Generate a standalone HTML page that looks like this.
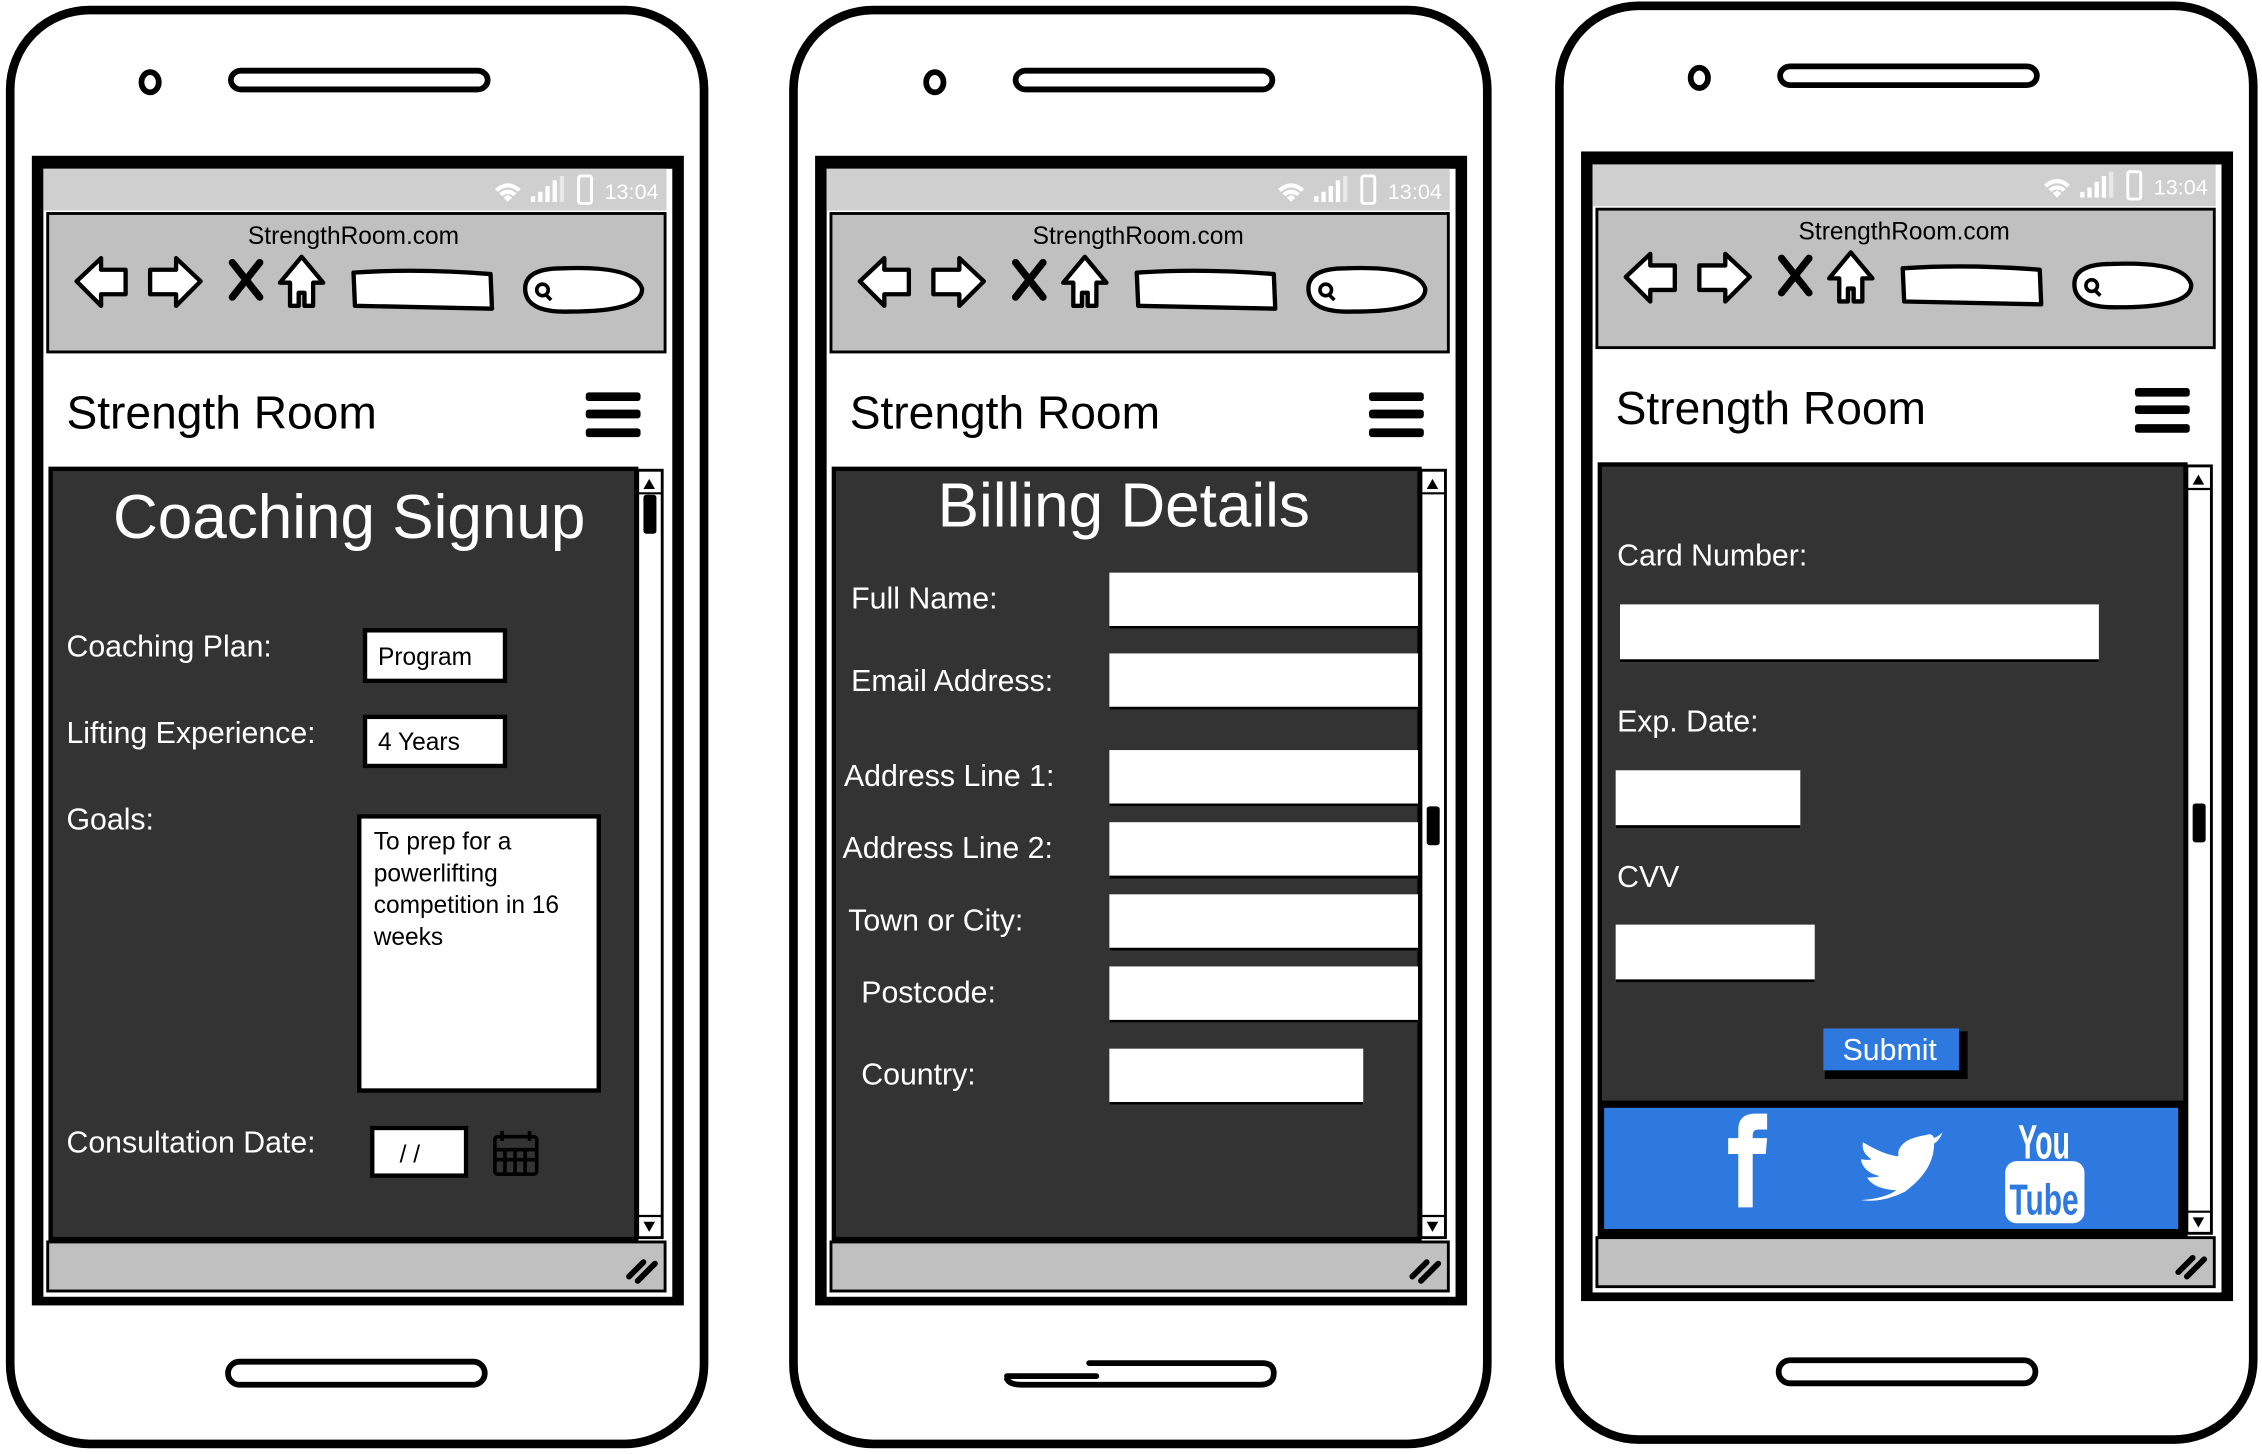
<!DOCTYPE html>
<html><head><meta charset="utf-8"><style>
html,body{margin:0;padding:0;background:#fff;}
svg{display:block}
text{font-family:"Liberation Sans",sans-serif}
</style></head><body>
<svg width="2262" height="1454" viewBox="0 0 1568 1008" xmlns="http://www.w3.org/2000/svg">
<rect width="1568" height="1008" fill="#fff"/>

<!-- ============ PHONE 1 ============ -->
<g>
<rect x="7" y="7" width="481" height="994" rx="55" fill="#fff" stroke="#000" stroke-width="6"/>
<ellipse cx="104" cy="57" rx="6" ry="7" fill="#fff" stroke="#000" stroke-width="4"/>
<rect x="160" y="49" width="178" height="13" rx="7" fill="#fff" stroke="#000" stroke-width="4"/>
<rect x="22" y="108" width="452" height="797" fill="#000"/>
<rect x="30" y="117" width="436" height="782" fill="#fff"/>
<rect x="30" y="117" width="432" height="29" fill="#cfcfcf"/>
<g fill="#fff"><path d="M343 131 q9-8 18 0 l-2 2 q-7-6-14 0z M346 134 q6-5 12 0 l-2 2 q-4-3-8 0z M349 137 l3-2 3 2 -3 3z"/>
<rect x="368" y="136" width="3" height="4"/><rect x="373" y="133" width="3" height="7"/><rect x="378" y="129" width="3" height="11"/><rect x="383" y="125" width="3" height="15"/><rect x="388" y="122" width="3" height="18" fill="#e8e8e8"/>
<rect x="401" y="122" width="9" height="19" rx="1.5" fill="none" stroke="#fff" stroke-width="2"/></g>
<text x="419" y="138" font-size="15" fill="#fff">13:04</text>
<rect x="33" y="148" width="428" height="96" fill="#c0c0c0" stroke="#000" stroke-width="2"/>
<text x="245" y="169" font-size="17" text-anchor="middle" fill="#000">StrengthRoom.com</text>
<g fill="#fff" stroke="#000" stroke-width="3" stroke-linejoin="round">
<path d="M53 195 L70 179 L70 187 L87 187 L87 204 L70 204 L70 212 Z"/>
<path d="M139 195 L122 179 L122 187 L104 187 L104 204 L122 204 L122 212 Z"/>
<path d="M209 178 L224 196 L217 196 L217 212 L211 212 L211 203 L207 203 L207 212 L201 212 L201 196 L194 196 Z"/>
<path d="M245 189 Q290 186 340 190 L341 214 Q290 213 246 212 Z"/>
<path d="M364 200 Q364 186 390 186 Q440 184 445 200 Q446 216 395 216 Q364 217 364 200 Z"/>
</g>
<path d="M161 182 L180 206 M180 182 L161 206" stroke="#000" stroke-width="5" stroke-linecap="round"/>
<circle cx="376" cy="201" r="4" fill="none" stroke="#000" stroke-width="2.5"/><path d="M378 204 l4 4" stroke="#000" stroke-width="2.5"/>
<rect x="33" y="246" width="428" height="78" fill="#fff"/>
<text x="46" y="297" font-size="32" fill="#000">Strength Room</text>
<g fill="#000"><rect x="406" y="272" width="38" height="6" rx="2"/><rect x="406" y="284" width="38" height="6" rx="2"/><rect x="406" y="297" width="38" height="6" rx="2"/></g>
<rect x="35" y="325" width="406" height="534" fill="#333" stroke="#000" stroke-width="3"/>
<rect x="442" y="326" width="17" height="532" fill="#fff" stroke="#000" stroke-width="2"/>
<path d="M446 339 l4-7 4 7z M446 847 l4 7 4-7z" fill="#000"/>
<line x1="442" y1="342" x2="459" y2="342" stroke="#000" stroke-width="1.5"/><line x1="442" y1="843" x2="459" y2="843" stroke="#000" stroke-width="1.5"/>
<rect x="446" y="343" width="9" height="27" rx="2" fill="#000"/>
<rect x="33" y="861" width="428" height="34" fill="#c0c0c0" stroke="#000" stroke-width="2"/>
<path d="M436 885 l10-10 M442 888 l12-12" stroke="#000" stroke-width="4" stroke-linecap="round"/>
<rect x="158" y="944" width="178" height="16" rx="8" fill="#fff" stroke="#000" stroke-width="4"/>
<!-- content -->
<text x="242" y="373" font-size="43" fill="#fff" text-anchor="middle">Coaching Signup</text>
<g font-size="21" fill="#fff">
<text x="46" y="455">Coaching Plan:</text>
<text x="46" y="515">Lifting Experience:</text>
<text x="46" y="575">Goals:</text>
<text x="46" y="799">Consultation Date:</text>
</g>
<g fill="#fff" stroke="#000" stroke-width="3">
<rect x="253" y="437" width="97" height="35"/>
<rect x="253" y="497" width="97" height="34"/>
<rect x="249" y="566" width="166" height="190"/>
<rect x="258" y="782" width="65" height="33"/>
</g>
<g font-size="17" fill="#000">
<text x="262" y="461">Program</text>
<text x="262" y="520">4 Years</text>
<text x="259" y="589">To prep for a</text>
<text x="259" y="611">powerlifting</text>
<text x="259" y="633">competition in 16</text>
<text x="259" y="655">weeks</text>
<text x="277" y="806">/ /</text>
</g>
<g fill="none" stroke="#000" stroke-width="2.5"><rect x="343" y="788" width="29" height="26" rx="2"/>
<path d="M343 797 h29 M343 804 h29 M350 797 v17 M357 797 v17 M364 797 v17 M348 784 v7 M367 784 v7"/></g>
</g>

<!-- ============ PHONE 2 ============ -->
<g transform="translate(543,0)">
<rect x="7" y="7" width="481" height="994" rx="55" fill="#fff" stroke="#000" stroke-width="6"/>
<ellipse cx="105" cy="57" rx="6" ry="7" fill="#fff" stroke="#000" stroke-width="4"/>
<rect x="161" y="49" width="178" height="13" rx="7" fill="#fff" stroke="#000" stroke-width="4"/>
<rect x="22" y="108" width="452" height="797" fill="#000"/>
<rect x="30" y="117" width="436" height="782" fill="#fff"/>
<rect x="30" y="117" width="432" height="29" fill="#cfcfcf"/>
<g fill="#fff"><path d="M343 131 q9-8 18 0 l-2 2 q-7-6-14 0z M346 134 q6-5 12 0 l-2 2 q-4-3-8 0z M349 137 l3-2 3 2 -3 3z"/>
<rect x="368" y="136" width="3" height="4"/><rect x="373" y="133" width="3" height="7"/><rect x="378" y="129" width="3" height="11"/><rect x="383" y="125" width="3" height="15"/><rect x="388" y="122" width="3" height="18" fill="#e8e8e8"/>
<rect x="401" y="122" width="9" height="19" rx="1.5" fill="none" stroke="#fff" stroke-width="2"/></g>
<text x="419" y="138" font-size="15" fill="#fff">13:04</text>
<rect x="33" y="148" width="428" height="96" fill="#c0c0c0" stroke="#000" stroke-width="2"/>
<text x="246" y="169" font-size="17" text-anchor="middle" fill="#000">StrengthRoom.com</text>
<g fill="#fff" stroke="#000" stroke-width="3" stroke-linejoin="round">
<path d="M53 195 L70 179 L70 187 L87 187 L87 204 L70 204 L70 212 Z"/>
<path d="M139 195 L122 179 L122 187 L104 187 L104 204 L122 204 L122 212 Z"/>
<path d="M209 178 L224 196 L217 196 L217 212 L211 212 L211 203 L207 203 L207 212 L201 212 L201 196 L194 196 Z"/>
<path d="M245 189 Q290 186 340 190 L341 214 Q290 213 246 212 Z"/>
<path d="M364 200 Q364 186 390 186 Q440 184 445 200 Q446 216 395 216 Q364 217 364 200 Z"/>
</g>
<path d="M161 182 L180 206 M180 182 L161 206" stroke="#000" stroke-width="5" stroke-linecap="round"/>
<circle cx="376" cy="201" r="4" fill="none" stroke="#000" stroke-width="2.5"/><path d="M378 204 l4 4" stroke="#000" stroke-width="2.5"/>
<rect x="33" y="246" width="428" height="78" fill="#fff"/>
<text x="46" y="297" font-size="32" fill="#000">Strength Room</text>
<g fill="#000"><rect x="406" y="272" width="38" height="6" rx="2"/><rect x="406" y="284" width="38" height="6" rx="2"/><rect x="406" y="297" width="38" height="6" rx="2"/></g>
<rect x="35" y="325" width="406" height="534" fill="#333" stroke="#000" stroke-width="3"/>
<rect x="442" y="326" width="17" height="532" fill="#fff" stroke="#000" stroke-width="2"/>
<path d="M446 339 l4-7 4 7z M446 847 l4 7 4-7z" fill="#000"/>
<line x1="442" y1="342" x2="459" y2="342" stroke="#000" stroke-width="1.5"/><line x1="442" y1="843" x2="459" y2="843" stroke="#000" stroke-width="1.5"/>
<rect x="446" y="559" width="9" height="27" rx="2" fill="#000"/>
<rect x="33" y="861" width="428" height="34" fill="#c0c0c0" stroke="#000" stroke-width="2"/>
<path d="M436 885 l10-10 M442 888 l12-12" stroke="#000" stroke-width="4" stroke-linecap="round"/>
<path d="M155 954 h62 M212 945 h120 q8 0 8 7 q0 8 -10 8 h-165 q-8 0 -10 -4" fill="none" stroke="#000" stroke-width="4" stroke-linecap="round"/>
<!-- content -->
<text x="236" y="365" font-size="43" fill="#fff" text-anchor="middle">Billing Details</text>
<g font-size="21" fill="#fff">
<text x="47" y="422">Full Name:</text>
<text x="47" y="479">Email Address:</text>
<text x="42" y="545">Address Line 1:</text>
<text x="41" y="595">Address Line 2:</text>
<text x="45" y="645">Town or City:</text>
<text x="54" y="695">Postcode:</text>
<text x="54" y="752">Country:</text>
</g>
<g fill="#fff"><rect x="226" y="397" width="214" height="39"/><rect x="226" y="453" width="214" height="39"/><rect x="226" y="520" width="214" height="39"/><rect x="226" y="570" width="214" height="39"/><rect x="226" y="620" width="214" height="39"/><rect x="226" y="670" width="214" height="39"/><rect x="226" y="727" width="176" height="39"/></g>
<g stroke="#000" stroke-width="2"><path d="M226 435h214 M226 491h214 M226 558h214 M226 608h214 M226 658h214 M226 708h214 M226 765h176"/></g>
</g>

<!-- ============ PHONE 3 ============ -->
<g transform="translate(1074,-3)">
<rect x="7" y="7" width="481" height="994" rx="55" fill="#fff" stroke="#000" stroke-width="6"/>
<ellipse cx="104" cy="57" rx="6" ry="7" fill="#fff" stroke="#000" stroke-width="4"/>
<rect x="160" y="49" width="178" height="13" rx="7" fill="#fff" stroke="#000" stroke-width="4"/>
<rect x="22" y="108" width="452" height="797" fill="#000"/>
<rect x="30" y="117" width="436" height="782" fill="#fff"/>
<rect x="30" y="117" width="432" height="29" fill="#cfcfcf"/>
<g fill="#fff"><path d="M343 131 q9-8 18 0 l-2 2 q-7-6-14 0z M346 134 q6-5 12 0 l-2 2 q-4-3-8 0z M349 137 l3-2 3 2 -3 3z"/>
<rect x="368" y="136" width="3" height="4"/><rect x="373" y="133" width="3" height="7"/><rect x="378" y="129" width="3" height="11"/><rect x="383" y="125" width="3" height="15"/><rect x="388" y="122" width="3" height="18" fill="#e8e8e8"/>
<rect x="401" y="122" width="9" height="19" rx="1.5" fill="none" stroke="#fff" stroke-width="2"/></g>
<text x="419" y="138" font-size="15" fill="#fff">13:04</text>
<rect x="33" y="148" width="428" height="96" fill="#c0c0c0" stroke="#000" stroke-width="2"/>
<text x="246" y="169" font-size="17" text-anchor="middle" fill="#000">StrengthRoom.com</text>
<g fill="#fff" stroke="#000" stroke-width="3" stroke-linejoin="round">
<path d="M53 195 L70 179 L70 187 L87 187 L87 204 L70 204 L70 212 Z"/>
<path d="M139 195 L122 179 L122 187 L104 187 L104 204 L122 204 L122 212 Z"/>
<path d="M209 178 L224 196 L217 196 L217 212 L211 212 L211 203 L207 203 L207 212 L201 212 L201 196 L194 196 Z"/>
<path d="M245 189 Q290 186 340 190 L341 214 Q290 213 246 212 Z"/>
<path d="M364 200 Q364 186 390 186 Q440 184 445 200 Q446 216 395 216 Q364 217 364 200 Z"/>
</g>
<path d="M161 182 L180 206 M180 182 L161 206" stroke="#000" stroke-width="5" stroke-linecap="round"/>
<circle cx="376" cy="201" r="4" fill="none" stroke="#000" stroke-width="2.5"/><path d="M378 204 l4 4" stroke="#000" stroke-width="2.5"/>
<rect x="33" y="246" width="428" height="78" fill="#fff"/>
<text x="46" y="297" font-size="32" fill="#000">Strength Room</text>
<g fill="#000"><rect x="406" y="272" width="38" height="6" rx="2"/><rect x="406" y="284" width="38" height="6" rx="2"/><rect x="406" y="297" width="38" height="6" rx="2"/></g>
<rect x="35" y="325" width="406" height="534" fill="#333" stroke="#000" stroke-width="3"/>
<rect x="442" y="326" width="17" height="532" fill="#fff" stroke="#000" stroke-width="2"/>
<path d="M446 339 l4-7 4 7z M446 847 l4 7 4-7z" fill="#000"/>
<line x1="442" y1="342" x2="459" y2="342" stroke="#000" stroke-width="1.5"/><line x1="442" y1="843" x2="459" y2="843" stroke="#000" stroke-width="1.5"/>
<rect x="446" y="560" width="9" height="27" rx="2" fill="#000"/>
<rect x="33" y="861" width="428" height="34" fill="#c0c0c0" stroke="#000" stroke-width="2"/>
<path d="M436 885 l10-10 M442 888 l12-12" stroke="#000" stroke-width="4" stroke-linecap="round"/>
<rect x="159" y="946" width="178" height="16" rx="8" fill="#fff" stroke="#000" stroke-width="4"/>
<!-- content -->
<g font-size="21" fill="#fff">
<text x="47" y="395">Card Number:</text>
<text x="47" y="510">Exp. Date:</text>
<text x="47" y="618">CVV</text>
</g>
<g fill="#fff"><rect x="49" y="422" width="332" height="40"/><rect x="46" y="537" width="128" height="40"/><rect x="46" y="644" width="138" height="40"/></g>
<g stroke="#000" stroke-width="2"><path d="M49 461h332 M46 576h128 M46 683h138"/></g>
<rect x="191" y="718" width="99" height="33" fill="#000"/>
<rect x="190" y="716" width="94" height="29" fill="#2d79e0"/>
<text x="236" y="738" font-size="21" fill="#fff" text-anchor="middle">Submit</text>
<rect x="35" y="766" width="405" height="92" fill="#000"/>
<rect x="38" y="771" width="398" height="84" fill="#2d79e0"/>
<path d="M131 840 V803 H124 V792 H131 V786 Q131 775 143 775 H151 V786 H145 Q141 786 141 790 V792 H151 L150 803 H141 V840 Z" fill="#fff"/>
<g transform="translate(216,788) scale(1.45,0.98) translate(-206,-786)">
<path d="M228 792 Q232 789 237 788 Q240 786 241 790 Q243 789 245 786 Q244 791 241 794 Q241 813 227 828 Q216 836 206 834 Q217 833 223 827 Q212 826 209 818 Q213 818 215 817 Q207 814 206 805 Q210 806 211 805 Q206 800 207 793 Q217 802 224 803 Q223 797 228 792 Z" fill="#fff"/>
</g>
<text x="343" y="806" font-size="29" fill="#fff" text-anchor="middle" font-weight="bold" transform="scale(1,1.15)" textLength="36" lengthAdjust="spacingAndGlyphs" dy="-105">You</text>
<rect x="316" y="808" width="55" height="43" rx="8" fill="#fff"/>
<text x="343" y="845" font-size="30" fill="#2d79e0" text-anchor="middle" font-weight="bold" textLength="48" lengthAdjust="spacingAndGlyphs">Tube</text>
</g>
</svg>
</body></html>
